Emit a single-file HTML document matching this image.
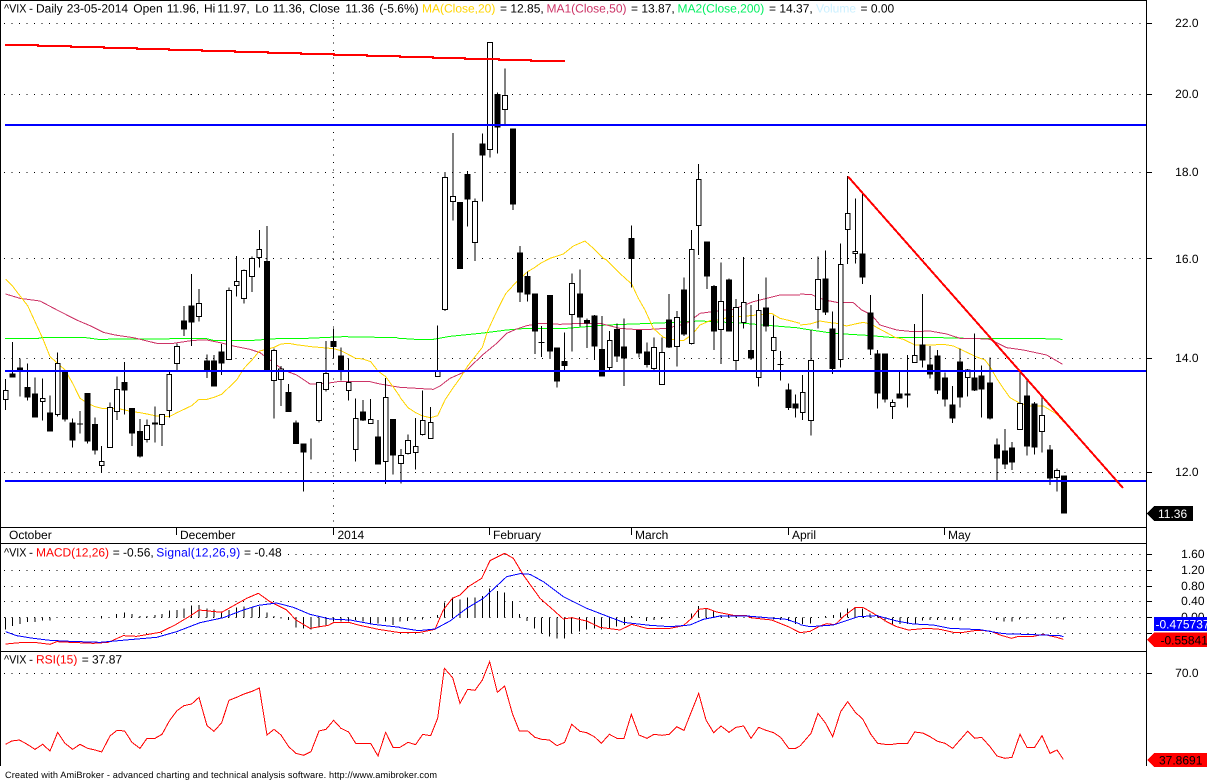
<!DOCTYPE html>
<html><head><meta charset="utf-8"><title>VIX chart</title>
<style>
html,body{margin:0;padding:0;background:#fff;width:1207px;height:781px;overflow:hidden}
svg{display:block}
text{font-family:"Liberation Sans",Arial,sans-serif;font-size:12px;fill:#000}
.w{fill:none;stroke:#000;stroke-width:3}
.b{fill:none;stroke:#000;stroke-width:18}
.o{fill:#fff;stroke:#000;stroke-width:3}
.ml{fill:none;stroke-width:3}
</style></head><body>
<svg width="1207" height="781" viewBox="0 0 1207 781" shape-rendering="crispEdges">
<rect width="1207" height="781" fill="#fff"/>
<!-- grid -->
<g stroke="#000" stroke-width="1" stroke-dasharray="1 6.47" fill="none">
<path d="M4 23.5H1146M4 94.5H1146M4 172.5H1146M4 258.5H1146M4 358.5H1146M4 472.5H1146"/>
<path d="M4 570.5H1146M4 586.5H1146M4 601.5H1146M4 617.5H1146M4 633.5H1146M4 673.5H1146M4 554.5H1146"/>
<path d="M333.5 20V527"/>
</g>
<!-- moving averages -->
<g transform="translate(0,260) scale(.33333)">
<polyline class="ml" stroke="#00ff00" points="15,235 115,235 130,232 250,232 295,238 540,236 620,236 640,241 760,241 830,236 920,235 1030,230 1190,233 1200,236"/>
<polyline class="ml" stroke="#cc3366" points="17,102 60,115 120,123 175,152 230,180 270,197 310,217 345,225 400,233 470,250 520,250 580,241 620,240 660,248 700,258 750,268 780,278 810,300 850,330 890,345 930,372 980,370 1020,364 1060,365 1110,365 1140,372 1200,382"/>
<polyline class="ml" stroke="#ffd400" points="17,58 35,75 58,105 83,137 105,185 128,235 150,290 173,310 195,330 218,370 240,415 263,430 285,440 305,445 330,447 351,445 374,450 396,455 420,458 441,462 465,467 486,470 508,470 531,458 552,448 575,437 597,418 621,418 642,412 665,403 687,382 710,360 732,325 756,300 778,273 801,268 822,262 843,252 866,250 888,254 911,257 933,260 957,262 978,264 1001,266 1023,272 1046,284 1067,295 1089,297 1112,305 1134,333 1157,350 1179,380 1200,410"/>
</g>
<g transform="translate(400,260) scale(.33333)">
<polyline class="ml" stroke="#00ff00" points="0,235 60,239 100,238 150,229 250,219 320,210 380,205 500,205 620,195 780,189 900,183 1020,189 1150,200 1200,204"/>
<polyline class="ml" stroke="#cc3366" points="0,382 50,385 100,388 120,378 150,355 195,335 250,283 290,250 320,220 350,207 380,197 420,190 480,193 540,190 600,190 660,205 700,208 750,208 800,205 860,190 900,160 960,152 1000,148 1060,125 1140,105 1200,105"/>
<polyline class="ml" stroke="#ffd400" points="0,412 24,443 47,458 68,468 92,473 113,467 135,420 158,385 180,355 203,318 225,290 247,262 262,215 285,165 307,120 318,100 350,65 383,35 400,25 425,8 450,-5 490,-18 520,-42 555,-57 580,-35 610,-5 620,0 640,20 665,45 695,72 715,115 735,150 760,205 790,232 825,240 850,242 875,225 900,195 930,182 960,180 990,170 1020,170 1070,165 1115,160 1140,175 1170,182 1200,190"/>
</g>
<g transform="translate(800,260) scale(.33333)">
<polyline class="ml" stroke="#00ff00" points="0,205 100,220 200,226 270,232 420,233 500,235 700,235 788,238"/>
<polyline class="ml" stroke="#cc3366" points="0,102 35,104 60,115 85,122 110,127 160,128 185,150 215,165 240,195 290,210 340,215 390,213 440,222 480,235 520,235 570,238 620,263 670,270 740,285 788,313"/>
<polyline class="ml" stroke="#ffd400" points="0,195 30,192 60,183 90,188 110,190 140,198 165,192 190,187 215,193 235,205 260,218 285,232 310,238 345,255 395,255 430,253 460,258 490,272 530,291 555,300 570,320 590,355 610,385 630,413 660,430 690,438 730,438 770,462 788,483"/>
</g>
<!-- candles -->
<g transform="translate(0,260) scale(.33333)">
<path class="w" d="M17 357V450M38 246V353M60 295V410M83 310V422M105 352V473M128 355V482M150 406V515M173 277V470M195 335V485M218 475V563M240 453V521M263 399V551M285 472V584M305 558V638M330 427V563M351 349V480M374 306V464M396 444V558M420 477V593M441 478V548M465 439V548M486 463V558M508 330V472M531 250V330M552 138V228M575 42V258M597 87V185M621 283V354M642 285V380M665 252V345M687 82V298M710 -12V110M732 28V130M756 -11V96M778 -90V22M801 -102V332M822 265V476M843 318V438M866 372V456M888 482V552M911 550V695M933 535V598M957 367V488M978 243V395M1001 205V295M1023 262V362M1046 295V422M1067 415V605M1089 420V483M1112 417V491M1134 480V614M1157 354V672M1179 477V644"/>
<path class="b" d="M38 340V353M60 322V332M83 381V413M105 400V473M150 457V515M195 335V479M218 487V542M240 490V494M263 399V545M285 492V572M374 366V392M396 444V521M420 513V590M465 487V494M552 181V209M575 136V188M621 301V330M642 301V380M665 274V311M801 3V332M866 396V456M888 487V552M911 550V578M1001 243V261M1023 286V331M1089 454V482M1134 529V614M1179 477V587"/>
<path class="o" d="M10 391H24V418H10ZM121 415H135V424H121ZM166 310H180V464H166ZM298 604H312V616H298ZM323 442H337V563H323ZM344 388H358V455H344ZM434 496H448V538H434ZM479 463H493V493H479ZM501 343H515V451H501ZM524 259H538V310H524ZM590 130H604V169H590ZM680 91H694V298H680ZM703 64H717V76H703ZM725 31H739V115H725ZM749 -5H763V49H749ZM771 -32H785V-8H771ZM815 271H829V361H815ZM836 327H850V358H836ZM950 367H964V482H950ZM971 340H985V388H971ZM1039 367H1053V391H1039ZM1060 475H1074V568H1060ZM1105 478H1119V490H1105ZM1150 412H1164V604H1150Z"/>
</g>
<g transform="translate(400,260) scale(.33333)">
<path class="w" d="M3 567V670M24 523V584M47 474V628M68 391V526M92 441V536M113 196V350M135 -263V153M159 -381V-118M203 -267V-100M225 -185V3M248 -380V-175M270 -653V-307M293 -503V-319M315 -575V-405M339 -395V-150M360 -42V126M383 35V125M405 100V282M424 198V291M450 105V296M471 262V383M494 217V330M516 40V275M540 28V200M561 175V264M584 165V300M606 168V350M629 213V330M651 190V306M672 175V378M695 -104V82M717 210V293M741 247V323M762 232V330M786 232V373M807 102V264M831 153V320M852 52V228M875 -90V254M896 -288V-15M921 -56V87M942 75V270M963 7V312M987 55V215M1008 117V330M1031 -9V206M1053 135V300M1076 102V380M1098 52V215M1121 166V330M1142 273V362M1166 370V450M1187 403V473"/>
<path class="b" d="M180 -174V27M203 -258V-181M248 -350V-313M293 -498V-397M339 -395V-166M360 -23V98M383 48V104M405 100V215M424 246V249M450 105V275M471 262V365M494 303V318M540 100V173M561 180V191M584 166V260M606 267V350M651 207V290M672 259V296M695 -66V-3M717 210V281M741 274V315M807 178V263M852 88V224M921 -56V50M942 78V215M987 58V215M1053 270V295M1098 142V200M1142 312V315M1166 388V444M1187 430V445"/>
<path class="o" d="M-4 587H10V610H-4ZM17 541H31V580H17ZM40 559H54V577H40ZM61 481H75V523H61ZM85 487H99V535H85ZM106 335H120V350H106ZM128 -248H142V149H128ZM152 -190H166V-176H152ZM218 -176H232V-53H218ZM263 -653H277V-332H263ZM308 -493H322V-452H308ZM509 70H523V163H509ZM622 241H636V322H622ZM755 262H769V326H755ZM779 277H793V373H779ZM824 172H838V260H824ZM868 -32H882V250H868ZM889 -242H903V-103H889ZM956 124H970V208H956ZM1001 142H1015V301H1001ZM1024 127H1038V187H1024ZM1069 151H1083V352H1069ZM1114 232H1128V271H1114Z"/>
</g>
<g transform="translate(800,260) scale(.33333)">
<path class="w" d="M8 345V480M33 210V527M54 -10V205M77 -28V165M98 155V342M122 -50V323M143 -252V12M166 -185V10M188 -200V72M212 105V285M233 270V446M255 280V428M278 418V477M299 335V416M323 285V443M344 192V307M368 102V323M390 258V355M413 270V402M435 337V440M458 378V489M480 265V443M503 327V410M524 220V393M545 316V473M570 292V478M591 535V660M615 507V627M636 546V630M660 335V510M681 358V587M704 426V584M726 408V578M750 555V675M771 625V695"/>
<path class="b" d="M77 55V158M98 205V327M188 -20V53M212 157V269M233 280V401M255 280V419M299 400V416M323 400V407M368 253V302M390 313V344M413 286V391M435 352V419M458 433V476M480 304V413M524 352V392M545 346V389M570 367V476M591 553V596M615 571V614M636 562V608M681 406V560M704 430V563M750 568V656M792 646V761"/>
<path class="o" d="M1 397H15V457H1ZM26 301H40V481H26ZM47 58H61V148H47ZM115 13H129V298H115ZM136 -140H150V-92H136ZM159 -26H173V-20H159ZM271 427H285V439H271ZM337 286H351V307H337ZM496 330H510V352H496ZM653 430H667V508H653ZM719 466H733V514H719ZM764 632H778V653H764Z"/>
</g>
<!-- blue horizontals -->
<path fill="none" stroke="#0000ff" stroke-width="2" d="M5 125H1146M5 371H1146M5 481H1146"/>
<!-- red study lines -->
<path fill="none" stroke="#ff0000" stroke-width="2" d="M5 45H38V46H71V47H104V48H137V49H169V50H202V51H235V52H268V53H301V54H334V55H367V56H400V57H433V58H465V59H499V60H531V61H565"/>
<path fill="none" stroke="#ff0000" stroke-width="2" d="M848 176.5L1123 488"/>
<!-- frame -->
<path fill="none" stroke="#000" stroke-width="1" d="M.5 0V766M0 .5H1146M1146.5 0V766M0 527.5H1146M0 543.5H1146M0 651.5H1146"/>
<path fill="none" stroke="#000" stroke-width="1" d="M176.5 527V535M333.5 527V535M489.5 527V535M631.5 527V535M788.5 527V535M944.5 527V535"/>
<path fill="none" stroke="#000" stroke-width="1" d="M1147 23.5H1152M1147 94.5H1152M1147 172.5H1152M1147 258.5H1152M1147 358.5H1152M1147 472.5H1152M1147 554.5H1152M1147 570.5H1152M1147 586.5H1152M1147 601.5H1152M1147 617.5H1152M1147 633.5H1152M1147 673.5H1152"/>
<!-- macd histogram -->
<g transform="translate(0,520) scale(.33333)">
<path class="w" d="M17 292V328M38 292V318M60 292V312M83 292V306M105 292V306M128 292V302M150 292V302M305 288V296M350 282V292M374 278V292M396 282V292M420 288V292M441 288V292M465 285V292M486 282V292M508 272V292M531 270V292M552 265V292M575 257V292M597 255V292M621 265V292M642 268V292M665 275V292M687 270V292M710 262V292M732 260V292M756 263V292M778 260V292M801 278V292M822 288V292M843 292V295M866 292V300M888 292V322M911 292V325M933 292V328M957 292V320M978 292V315M1001 292V305M1023 292V305M1046 292V305M1067 292V300M1089 292V305M1112 292V310M1134 292V310M1157 292V305M1179 292V315"/>
<polyline class="ml" stroke="#ff0000" points="17,372 60,368 110,368 150,373 170,365 210,367 280,370 325,367 370,347 410,349 480,337 525,315 575,285 597,270 665,277 690,263 740,235 775,220 810,245 860,270 888,300 930,325 985,316 1000,308 1050,308 1075,315 1135,328 1200,338"/>
<polyline class="ml" stroke="#0000ff" points="17,335 50,347 100,355 150,361 210,364 300,367 400,358 470,352 530,335 600,308 670,293 730,270 775,256 830,249 880,262 930,283 990,297 1050,300 1120,313 1200,322"/>
<polyline class="ml" stroke="#ff0000" points="17,673 35,663 58,660 80,672 105,688 128,673 150,693 173,637 195,670 218,688 240,673 263,685 285,690 305,696 330,648 351,631 374,633 396,667 420,685 441,655 465,655 486,643 508,603 531,572 552,557 575,552 597,532 621,617 642,634 665,608 687,541 710,532 732,522 756,514 778,504 801,645 822,628 843,645 866,680 888,700 911,706 933,695 957,633 978,628 1001,601 1023,625 1046,636 1067,670 1089,670 1112,670 1134,708 1157,637 1179,682 1200,682"/>
</g>
<g transform="translate(400,520) scale(.33333)">
<path class="w" d="M0 292V305M22 292V303M45 292V298M68 292V298M113 285V292M133 248V292M157 232V292M180 238V292M203 232V292M225 232V292M247 228V292M269 205V292M292 213V292M314 218V292M337 245V292M358 282V292M381 292V303M403 292V325M425 292V340M448 292V350M471 292V355M494 292V355M515 292V340M538 292V335M560 292V328M583 292V325M605 292V328M628 292V325M650 292V320M673 292V315M695 288V292M740 292V303M762 292V300M785 292V297M875 280V292M896 258V292M918 265V292M941 275V292M963 285V292M985 285V292M1008 287V292M1120 292V298M1142 292V300M1165 292V303M1187 292V312"/>
<polyline class="ml" stroke="#ff0000" points="0,338 60,337 105,328 130,270 157,235 180,225 205,200 245,175 270,122 314,100 340,115 370,165 420,235 460,270 490,297 515,293 560,303 600,322 660,330 695,313 740,325 810,325 850,317 875,295 896,268 920,265 950,276 1000,286 1040,287 1050,293 1115,300 1165,320 1200,338"/>
<polyline class="ml" stroke="#0000ff" points="0,323 55,332 105,327 150,303 200,265 250,235 320,170 360,161 390,163 430,185 490,230 560,265 620,288 670,307 750,316 810,320 870,315 910,298 960,288 1040,288 1100,293 1160,298 1200,312"/>
<polyline class="ml" stroke="#ff0000" points="0,682 24,667 47,674 68,643 92,647 113,595 133,445 158,473 180,550 203,508 225,511 247,480 269,425 292,517 314,498 337,580 358,633 383,633 405,652 425,658 448,660 471,677 494,667 515,613 540,634 560,638 583,650 604,670 628,643 651,655 672,655 694,583 717,645 741,655 762,643 786,646 807,643 830,620 852,631 896,520 918,600 941,638 963,618 987,637 1008,622 1031,618 1053,655 1076,622 1098,631 1121,638 1142,652 1166,685 1187,685 1200,678"/>
</g>
<g transform="translate(800,520) scale(.33333)">
<path class="w" d="M8 292V312M32 292V310M77 288V292M100 285V292M122 278V292M143 265V292M165 262V292M188 265V292M210 280V292M232 285V292M255 292V305M277 292V312M300 292V312M323 292V312M346 292V310M368 292V302M390 292V300M413 292V300M435 292V300M458 292V300M480 292V302M590 292V300M612 292V304M636 292V304M658 292V298M680 292V296M705 292V296M770 292V296M790 292V298"/>
<polyline class="ml" stroke="#ff0000" points="0,338 30,334 60,318 80,311 105,314 130,290 165,263 190,263 220,280 260,305 290,320 325,330 380,325 420,328 460,337 490,337 530,331 570,333 600,345 635,355 655,349 700,349 730,343 770,352 790,358"/>
<polyline class="ml" stroke="#0000ff" points="0,314 30,320 100,315 130,305 175,290 230,287 290,303 340,312 400,315 450,325 540,329 610,341 700,344 780,347 790,350"/>
<polyline class="ml" stroke="#ff0000" points="0,678 33,640 54,580 77,610 98,650 122,575 143,545 166,577 188,597 212,642 233,670 255,673 278,673 299,670 323,670 344,636 368,639 390,650 413,664 435,670 458,685 480,660 503,634 524,655 545,652 570,680 591,708 615,715 636,712 660,643 681,682 704,682 726,647 750,700 771,690 790,718"/>
</g>
<!-- panel titles -->
<rect x="2" y="546" width="280" height="12" fill="#fff"/>
<g text-rendering="geometricPrecision">
<text y="12.5"><tspan x="4" textLength="22.5" lengthAdjust="spacingAndGlyphs">^VIX</tspan> <tspan x="29">-</tspan> <tspan x="36">Daily</tspan> <tspan x="66.7">23-05-2014</tspan> <tspan x="133.3">Open</tspan> <tspan x="166.7">11.96,</tspan> <tspan x="204">Hi</tspan> <tspan x="217.3">11.97,</tspan> <tspan x="255.3">Lo</tspan> <tspan x="272.7">11.36,</tspan> <tspan x="309.3">Close</tspan> <tspan x="345.3">11.36</tspan> <tspan x="379.3">(-5.6%)</tspan></text>
<text x="422" y="12.5" style="fill:#ffd400">MA(Close,20)</text>
<text x="500" y="12.5">= 12.85,</text>
<text x="546.5" y="12.5" style="fill:#cc3366">MA1(Close,50)</text>
<text x="631" y="12.5">= 13.87,</text>
<text x="677.5" y="12.5" style="fill:#00f060">MA2(Close,200)</text>
<text x="769" y="12.5">= 14.37,</text>
<text x="816" y="12.5" style="fill:#ccf0ff">Volume</text>
<text x="860.5" y="12.5">= 0.00</text>
<text x="9" y="539">October</text>
<text x="180" y="539">December</text>
<text x="337.5" y="539">2014</text>
<text x="493" y="539">February</text>
<text x="635" y="539">March</text>
<text x="792" y="539">April</text>
<text x="948" y="539">May</text>
<text y="556.5"><tspan x="4" textLength="22.5" lengthAdjust="spacingAndGlyphs">^VIX</tspan> <tspan x="29">-</tspan> <tspan x="36" style="fill:#ff0000" textLength="73" lengthAdjust="spacing">MACD(12,26)</tspan> <tspan x="112.7">= -0.56,</tspan> <tspan x="156.3" style="fill:#0000ff" textLength="84" lengthAdjust="spacing">Signal(12,26,9)</tspan> <tspan x="244">= -0.48</tspan></text>
<text y="663.5"><tspan x="4" textLength="22.5" lengthAdjust="spacingAndGlyphs">^VIX</tspan> <tspan x="29">-</tspan> <tspan x="36" style="fill:#ff0000">RSI(15)</tspan> <tspan x="81.7">= 37.87</tspan></text>
<text x="5" y="778" style="font-size:9.2px" textLength="432" lengthAdjust="spacing">Created with AmiBroker - advanced charting and technical analysis software. http://www.amibroker.com</text>
<g text-anchor="end">
<text x="1198.5" y="27">22.0</text>
<text x="1198.5" y="98">20.0</text>
<text x="1198.5" y="176">18.0</text>
<text x="1198.5" y="263">16.0</text>
<text x="1198.5" y="362">14.0</text>
<text x="1198.5" y="476">12.0</text>
<text x="1204.5" y="558">1.60</text>
<text x="1204.5" y="574">1.20</text>
<text x="1204.5" y="590">0.80</text>
<text x="1204.5" y="605">0.40</text>
<text x="1204.5" y="621">0.00</text>
<text x="1198.5" y="677">70.0</text>
</g>
</g>
<!-- value tags -->
<polygon points="1147,513.5 1154,506 1193,506 1193,521 1154,521" fill="#000"/>
<text x="1158" y="518" style="fill:#fff">11.36</text>
<rect x="1154" y="617" width="53" height="14" fill="#0000ff"/>
<text x="1155.5" y="628.5" style="fill:#fff">-0.475737</text>
<polygon points="1147,640 1154,632.5 1207,632.5 1207,647 1154,647" fill="#ff0000"/>
<text x="1160.5" y="644.5">-0.558415</text>
<polygon points="1147,760 1154,753 1207,753 1207,767 1154,767" fill="#ff0000"/>
<text x="1159" y="764.5">37.8691</text>
</svg>
</body></html>
